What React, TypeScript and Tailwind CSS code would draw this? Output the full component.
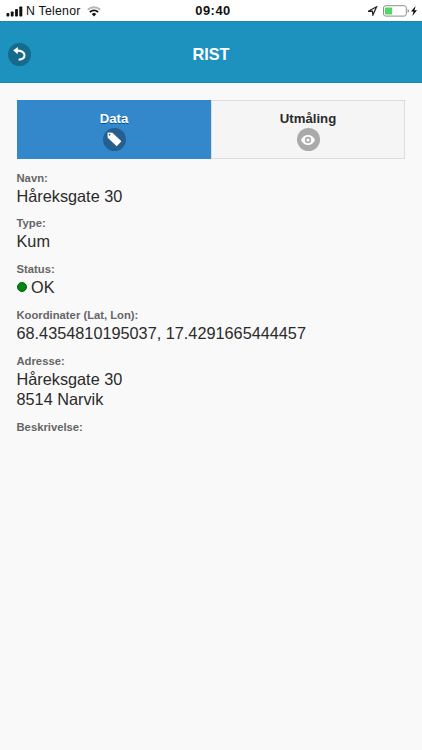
import type { ReactNode } from "react";

function SignalIcon() {
  return (
    <svg width="17" height="11" viewBox="0 0 17 11" fill="#111">
      <rect x="0.5" y="7" width="2.8" height="3.5" rx="0.8" />
      <rect x="4.8" y="5.4" width="2.8" height="5.1" rx="0.8" />
      <rect x="9.1" y="3" width="2.8" height="7.5" rx="0.8" />
      <rect x="13.3" y="0.4" width="3" height="10.1" rx="0.8" />
    </svg>
  );
}

function WifiIcon() {
  return (
    <svg width="14" height="11" viewBox="0 0 14 11" fill="none" strokeWidth="1.9">
      <path d="M0.8 3.7a9 9 0 0 1 12.4 0" stroke="#b5b5b5" />
      <path d="M2.9 6.1a5.8 5.8 0 0 1 8.2 0" stroke="#111" />
      <path d="M4.7 8a3.3 3.3 0 0 1 4.6 0L7 10.4z" fill="#111" />
    </svg>
  );
}

function StatusBar() {
  return (
    <div className="grid h-[21px] grid-cols-3 items-center bg-white pt-px text-[#111]">
      <div className="flex items-center pl-1.5">
        <SignalIcon />
        <span className="ml-[3px] text-[12.3px] whitespace-nowrap tracking-[0.24px]">N Telenor</span>
        <span className="ml-1.5">
          <WifiIcon />
        </span>
      </div>
      <div className="pl-1 text-center text-[12.9px] leading-[18px] font-semibold tracking-[0.5px]">09:40</div>
      <div className="flex items-center justify-end pr-[5px]">
        <svg width="11" height="10" viewBox="0 0 11 10" fill="none" stroke="#222" strokeWidth="1.2">
          <path d="M1.2 5.3L9.6 0.8L5.9 9.1L5.4 5.2z" />
        </svg>
        <svg className="ml-[5px]" width="27" height="12" viewBox="0 0 27 12" fill="none">
          <rect x="0.5" y="0.7" width="22.8" height="10.4" rx="2.2" stroke="#8e8e8e" />
          <rect x="2" y="2.4" width="7" height="7" rx="0.6" fill="#4cd964" />
          <path d="M24.6 4v4q1.5-.8 1.5-2t-1.5-2z" fill="#8e8e8e" />
        </svg>
        <svg className="ml-px" width="6" height="10" viewBox="0 0 6 10" fill="#111">
          <path d="M4.6 0L0 5.6h2.5L1.4 10L6 4.2H3.5z" />
        </svg>
      </div>
    </div>
  );
}

function BackIcon() {
  return (
    <svg width="14" height="14" viewBox="0 0 14 14">
      <path d="M0.2 3.2L5 0.1L4.6 7.2z" fill="#fff" />
      <path d="M3.6 3.6C8.6 3.4 11.8 5.4 11.5 8.7C11.3 11.2 9 12.5 5.6 12.7" fill="none" stroke="#fff" strokeWidth="2.1" />
    </svg>
  );
}

function Header() {
  return (
    <header className="grid h-[62px] grid-cols-[40px_1fr_40px] items-center border-y border-[#1c88b1] bg-[#1d92be]">
      <button className="mt-1 ml-2 flex h-[23px] w-[23px] items-center justify-center rounded-full bg-[#166a8b]">
        <BackIcon />
      </button>
      <h1 className="pt-1 text-center text-[16.3px] leading-5 font-bold text-white">RIST</h1>
    </header>
  );
}

function TagIcon() {
  return (
    <svg width="15" height="15" viewBox="0 0 15 15">
      <path
        d="M0.5 0.5L5.4 0.7L14.4 9.2L9.7 14.2L0.7 5.8zM2.6 1.8a0.9 0.9 0 1 0 0 1.8a0.9 0.9 0 0 0 0-1.8z"
        fill="#fff"
        fillRule="evenodd"
      />
    </svg>
  );
}

function EyeIcon() {
  return (
    <svg width="14" height="10" viewBox="0 0 14 10">
      <path d="M7 0C3.8 0 1.1 2.1 0 5c1.1 2.9 3.8 5 7 5s5.9-2.1 7-5c-1.1-2.9-3.8-5-7-5z" fill="#fff" />
      <circle cx="7" cy="5" r="2.4" fill="none" stroke="#aaa" strokeWidth="1.6" />
    </svg>
  );
}

function Field({ label, children }: { label: string; children?: ReactNode }) {
  return (
    <div className="mb-[9.6px]">
      <div className="text-[11.25px] leading-4 font-bold text-[#666]">{label}</div>
      <div className="text-[16.28px] leading-[20.2px] text-[#2b2b2b]">{children}</div>
    </div>
  );
}

export default function App() {
  return (
    <div className="min-h-screen bg-[#f9f9f9] font-['Liberation_Sans',Arial,sans-serif]">
      <StatusBar />
      <Header />
      <main className="px-[17px] pt-[17px]">
        <div className="grid h-[59px] grid-cols-[194px_1fr] text-center text-[13.2px] leading-4 font-bold">
          <button className="flex flex-col items-center bg-[#3388cc] pt-[11px] text-white [text-shadow:0_1px_0_#005599]">
            Data
            <span className="mt-px flex h-[23px] w-[23px] items-center justify-center rounded-full bg-[#265f8f]">
              <TagIcon />
            </span>
          </button>
          <button className="flex flex-col items-center border border-[#ddd] bg-[#f5f5f5] pt-2.5 text-[#2b2b2b]">
            Utmåling
            <span className="mt-px flex h-[23px] w-[23px] items-center justify-center rounded-full bg-[#aaa]">
              <EyeIcon />
            </span>
          </button>
        </div>
        <div className="-ml-[0.5px] pt-[10.5px]">
          <Field label="Navn:">Håreksgate 30</Field>
          <Field label="Type:">Kum</Field>
          <Field label="Status:">
            <span className="flex items-center gap-[4.5px]">
              <span className="h-2.5 w-2.5 rounded-full border border-[#006400] bg-[#078414]" />
              OK
            </span>
          </Field>
          <Field label="Koordinater (Lat, Lon):">68.4354810195037, 17.4291665444457</Field>
          <Field label="Adresse:">
            Håreksgate 30
            <br />
            8514 Narvik
          </Field>
          <Field label="Beskrivelse:" />
        </div>
      </main>
    </div>
  );
}
